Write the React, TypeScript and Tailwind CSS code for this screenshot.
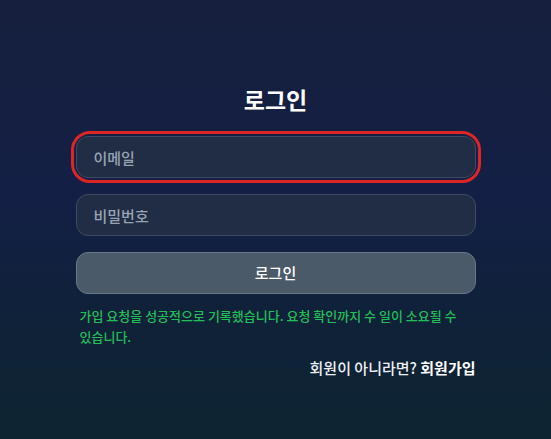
import React from 'react'

const font = { fontFamily: '"Noto Sans CJK KR", "Noto Sans", sans-serif' }

const App: React.FC = () => {
    return (
        <div
            style={font}
            className="min-h-screen w-full bg-[linear-gradient(180deg,#161f3d_0%,#131f45_45%,#0f2238_75%,#0e2431_100%)] flex justify-center"
        >
            <div className="w-[400px] pt-[84px] flex flex-col">
                <h1 className="text-center text-[23px] leading-[30px] font-bold text-white mb-[22px]">로그인</h1>

                <div className="rounded-[14px] outline-[3px] outline-solid outline-[#dc2626] outline-offset-[2px]">
                    <input
                        placeholder="이메일"
                        className="w-full h-[42px] rounded-xl bg-[#212d45] border border-[#3d4a62] px-[17px] text-[15px] font-medium text-white placeholder:text-[#98a4b5] focus:outline-none"
                    />
                </div>

                <input
                    type="password"
                    placeholder="비밀번호"
                    className="mt-4 w-full h-[42px] rounded-xl bg-[#212d45] border border-[#3d4a62] px-[17px] text-[15px] font-medium text-white placeholder:text-[#98a4b5] focus:outline-none"
                />

                <button className="mt-4 w-full h-[42px] rounded-xl bg-[#4b5a69] border border-[#68778a] text-[15px] font-medium text-white">
                    로그인
                </button>

                <p className="mt-[11px] px-1 break-keep text-[13px] font-medium leading-[21px] text-[#22bf57]">
                    가입 요청을 성공적으로 기록했습니다. 요청 확인까지 수 일이 소요될 수 있습니다.
                </p>

                <p className="mt-[11px] text-right text-[15px] font-medium leading-[20px] text-[#eef0f4]">
                    회원이 아니라면? <span className="font-bold text-white">회원가입</span>
                </p>
            </div>
        </div>
    )
}

export default App
